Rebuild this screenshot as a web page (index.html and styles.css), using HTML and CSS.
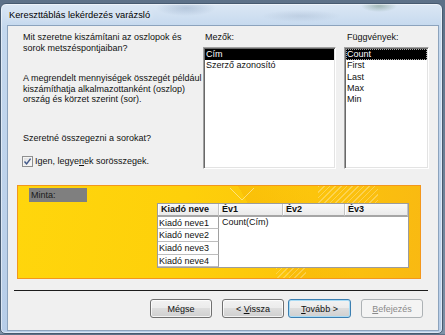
FILE: index.html
```html
<!DOCTYPE html>
<html lang="hu">

<head>
  <meta charset="UTF-8">
  <title>Kereszttáblás lekérdezés varázsló</title>
  <link rel="stylesheet" href="styles.css">
</head>

<body>
  <div class="window">
    <div class="titlebar">Kereszttáblás lekérdezés varázsló</div>

    <div class="client">
      <div class="top">
        <div class="intro">
          <p>Mit szeretne kiszámítani az oszlopok és<br>sorok metszéspontjaiban?</p>
          <p class="para2">A megrendelt mennyiségek összegét például<br>kiszámíthatja alkalmazottanként (oszlop)<br>ország és körzet szerint (sor).</p>
          <p class="para3">Szeretné összegezni a sorokat?</p>
          <label class="check">
            <span class="box">
              <svg width="9" height="9" viewBox="0 0 9 9"><path d="M1.5 4.6 L3.6 6.9 L7.6 1.6" fill="none" stroke="#42598a" stroke-width="1.5"/></svg>
            </span>
            <span>Igen, legye<u>n</u>ek sorösszegek.</span>
          </label>
        </div>

        <div class="field fields">
          <div class="label">Mezők:</div>
          <ul class="list">
            <li class="sel">Cím</li>
            <li>Szerző azonosító</li>
          </ul>
        </div>

        <div class="field funcs">
          <div class="label">Függvények:</div>
          <ul class="list">
            <li class="sel focus">Count</li>
            <li>First</li>
            <li>Last</li>
            <li>Max</li>
            <li>Min</li>
          </ul>
        </div>
      </div>

      <div class="sample">
        <div class="minta">Minta:</div>
        <div class="grid">
          <div class="th">Kiadó neve</div>
          <div class="th">Év1</div>
          <div class="th">Év2</div>
          <div class="th">Év3</div>
          <div class="rh">Kiadó neve1</div>
          <div class="data">Count(Cím)</div>
          <div class="rh">Kiadó neve2</div>
          <div class="rh">Kiadó neve3</div>
          <div class="rh">Kiadó neve4</div>
        </div>
      </div>

      <div class="sep"></div>

      <div class="buttons">
        <button class="btn">Mégse</button>
        <div class="nav">
          <button class="btn">&lt; <u>V</u>issza</button>
          <button class="btn default"><u>T</u>ovább &gt;</button>
        </div>
        <button class="btn" disabled><u>B</u>efejezés</button>
      </div>
    </div>
  </div>
</body>

</html>
```

FILE: styles.css
```css
* {
  box-sizing: border-box;
}

body {
  margin: 0;
  overflow: hidden;
  background: linear-gradient(#5d7188, #7d90a6);
  font-family: "Liberation Sans", Arial, sans-serif;
  font-size: 9px;
  color: #111;
}

/* aero frame */
.window {
  margin-top: 3px;
  width: 443px;
  height: 331px;
  border: 1px solid #475a70;
  border-radius: 6px 6px 5px 5px;
  background:
    radial-gradient(ellipse 30px 8px at 185px 4px, rgba(80, 110, 150, .25), transparent),
    radial-gradient(ellipse 40px 6px at 300px 12px, rgba(120, 140, 170, .2), transparent),
    radial-gradient(ellipse 18px 6px at 378px 2px, rgba(60, 100, 70, .35), transparent),
    linear-gradient(180deg, #dbe7f4 0, #c4d8ee 24px, #b7cde8 100%);
  box-shadow: inset 0 0 0 1px rgba(255, 255, 255, .5);
}

.titlebar {
  height: 22px;
  padding: 4px 0 0 8px;
  font-size: 9.3px;
  line-height: 14px;
  color: #000;
  text-shadow: 0 0 6px #fff;
}

.client {
  margin-left: 7px;
  width: 430px;
  height: 304px;
  background: #f0f0f0;
  box-shadow: 0 0 0 1px #8ca3bd;
}

/* upper part: text + two lists */
.top {
  display: flex;
  height: 143px;
  padding: 6px 9px 0 15px;
}

.intro {
  width: 180px;
  line-height: 10.5px;
}

.intro p {
  margin: 0;
}

.intro .para2 {
  margin-top: 20px;
}

.intro .para3 {
  margin-top: 28px;
}

.check {
  display: flex;
  align-items: center;
  gap: 2px;
  height: 12px;
  margin: 12px 0 0 -1px;
}

.check .box {
  display: flex;
  align-items: center;
  justify-content: center;
  width: 11px;
  height: 11px;
  border: 1px solid #8e8f8f;
  background: linear-gradient(135deg, #dcdcdc, #fbfbfb);
  box-shadow: inset 0 0 0 1px #f4f4f4;
}

.field {
  display: flex;
  flex-direction: column;
}

.fields {
  width: 133px;
}

.funcs {
  width: 85px;
  margin-left: 8px;
}

.label {
  line-height: 11px;
  margin-bottom: 4px;
  padding-left: 2px;
}

.funcs .label {
  padding-left: 3px;
}

.list {
  flex: 1;
  margin: 0;
  padding: 1px;
  list-style: none;
  background: #fff;
  border: 1px solid;
  border-color: #a0a0a0 #fff #fff #a0a0a0;
  box-shadow: inset 1px 1px 0 #696969, inset -1px -1px 0 #e3e3e3;
}

.list li {
  line-height: 11.25px;
  padding-left: 1px;
  white-space: nowrap;
}

.list .sel {
  background: #000;
  color: #fff;
}

.list .focus {
  outline: 1px dotted #a8a8a8;
  outline-offset: -1px;
}

/* sample preview */
.sample {
  width: 404px;
  height: 94px;
  margin: 16px 0 0 9px;
  padding: 2px 0 0 11px;
  border: 1px solid #f3971c;
  background:
    linear-gradient(45deg, transparent 47%, rgba(255, 255, 255, .45) 48%, rgba(255, 255, 255, .45) 52%, transparent 53%) 212px 2px / 12px 12px no-repeat,
    linear-gradient(-45deg, transparent 47%, rgba(255, 255, 255, .45) 48%, rgba(255, 255, 255, .45) 52%, transparent 53%) 224px 2px / 12px 12px no-repeat,
    repeating-linear-gradient(135deg, rgba(255, 255, 255, .28) 0 1px, transparent 1px 4px) 300px 0 / 60px 18px no-repeat,
    repeating-linear-gradient(135deg, rgba(255, 255, 255, .25) 0 1px, transparent 1px 4px) 258px 76px / 30px 16px no-repeat,
    linear-gradient(60deg, transparent 60%, rgba(240, 160, 0, .25) 60%, transparent 75%),
    linear-gradient(100deg, #ffd60c 0%, #fed00a 40%, #fcc40c 72%, #f9b912 100%);
}

.minta {
  width: 58px;
  height: 14px;
  padding-left: 2px;
  line-height: 14px;
  background: #7f7f7f;
  color: #1a1a1a;
}

.grid {
  display: grid;
  grid-template-columns: 61px 64px 62px 63px;
  grid-template-rows: 13px 12px 13px 13px 12px;
  width: 252px;
  margin: 1px 0 0 128px;
  border: 1px solid #9c9c9c;
  background: #fff;
}

.grid .th {
  padding-left: 3px;
  line-height: 11px;
  font-weight: bold;
  background: linear-gradient(#f8f8f8, #ebebeb);
  border-bottom: 2px solid #a6a6a6;
  border-right: 1px solid #c4c4c4;
  box-shadow: inset 1px 0 0 #fff;
}

.grid .rh {
  display: flex;
  align-items: center;
  padding-left: 1px;
  grid-column: 1;
  border-right: 1px solid #a0a0a0;
  border-bottom: 1px solid #bdbdbd;
}

.grid .data {
  grid-column: 2 / 5;
  grid-row: 2 / 6;
  padding-left: 3px;
  line-height: 11px;
}

.sep {
  height: 1px;
  margin: 11px 10px 0 6px;
  background: #1c1c1c;
}

/* button row */
.buttons {
  display: flex;
  justify-content: flex-end;
  gap: 10px;
  margin-top: 8px;
  padding-right: 15px;
}

.nav {
  display: flex;
  gap: 4px;
}

.btn {
  width: 62px;
  height: 19px;
  padding: 0;
  font: inherit;
  color: #111;
  border: 1px solid #707070;
  border-radius: 3px;
  background: linear-gradient(#f2f2f2 0, #ebebeb 50%, #dddddd 50%, #cfcfcf 100%);
  box-shadow: inset 0 0 0 1px rgba(255, 255, 255, .75);
}

.btn.default {
  width: 63px;
  border-color: #3c7fb1;
  box-shadow: inset 0 0 0 1px #a9dcf6;
}

.btn:disabled {
  color: #8a8a8a;
  border-color: #adb2b5;
  background: #f4f4f4;
  box-shadow: none;
}
```
